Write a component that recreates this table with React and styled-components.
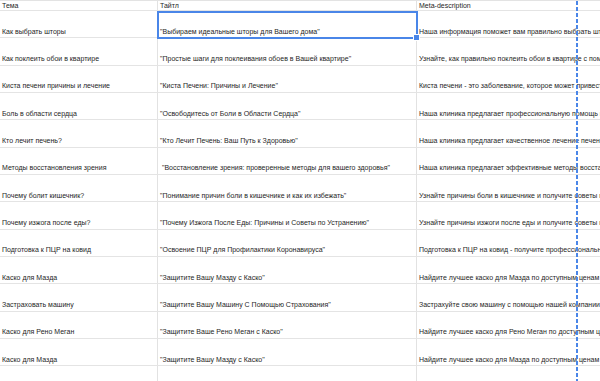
import React from "react";
import styled, { createGlobalStyle } from "styled-components";

const Global = createGlobalStyle`
  html, body { margin: 0; padding: 0; background: #fff; }
  body { font-family: "Liberation Sans", Arial, sans-serif; overflow: hidden; }
`;

const ROW_H = 27.33;

const Sheet = styled.div`
  position: relative;
  width: 600px;
  height: 381px;
  overflow: hidden;
  border-top: 1px solid #e3e3e3;
  box-sizing: border-box;
`;

const Row = styled.div`
  display: grid;
  grid-template-columns: 158px 259px 1fr;
  height: ${(p) => (p.$header ? "10px" : `${ROW_H}px`)};
  box-sizing: border-box;
  border-bottom: 1px solid #e4e4e4;
`;

const Cell = styled.div`
  display: flex;
  align-items: ${(p) => (p.$header ? "center" : "flex-end")};
  padding: ${(p) => (p.$header ? "0 2px" : "0 2px 1.5px 2px")};
  box-sizing: border-box;
  border-right: ${(p) => (p.$last ? "none" : "1px solid #e2e2e2")};
  white-space: pre;
  overflow: hidden;
  font-size: 7px;
  line-height: 8px;
  color: #262626;
`;

const Selection = styled.div`
  position: absolute;
  left: 157px;
  top: 10px;
  width: 261px;
  height: ${ROW_H + 1}px;
  box-sizing: border-box;
  border: 2px solid #4a86e8;
  pointer-events: none;
`;

const Handle = styled.div`
  position: absolute;
  right: -4px;
  bottom: -4px;
  width: 5px;
  height: 5px;
  background: #4a86e8;
  border: 0.5px solid #fff;
`;

const DashedLine = styled.div`
  position: absolute;
  left: 576px;
  top: 0;
  bottom: 0;
  width: 1.5px;
  background: repeating-linear-gradient(
    to bottom,
    #4a86e8 0px,
    #4a86e8 4px,
    transparent 4px,
    transparent 6px
  );
`;

const rows = [
  ["Как выбрать шторы", "\"Выбираем идеальные шторы для Вашего дома\"", "Наша информация поможет вам правильно выбрать шторы для вашего дома"],
  ["Как поклеить обои в квартире", "\"Простые шаги для поклеивания обоев в Вашей квартире\"", "Узнайте, как правильно поклеить обои в квартире с помощью наших советов"],
  ["Киста печени причины и лечение", "\"Киста Печени: Причины и Лечение\"", "Киста печени - это заболевание, которое может привести к осложнениям"],
  ["Боль в области сердца", "\"Освободитесь от Боли в Области Сердца\"", "Наша клиника предлагает профессиональную помощь при боли в сердце"],
  ["Кто лечит печень?", "\"Кто Лечит Печень: Ваш Путь к Здоровью\"", "Наша клиника предлагает качественное лечение печени"],
  ["Методы восстановления зрения", " \"Восстановление зрения: проверенные методы для вашего здоровья\"", "Наша клиника предлагает эффективные методы восстановления зрения"],
  ["Почему болит кишечник?", "\"Понимание причин боли в кишечнике и как их избежать\"", "Узнайте причины боли в кишечнике и получите советы по лечению"],
  ["Почему изжога после еды?", "\"Почему Изжога После Еды: Причины и Советы по Устранению\"", "Узнайте причины изжоги после еды и получите советы по устранению"],
  ["Подготовка к ПЦР на ковид", "\"Освоение ПЦР для Профилактики Коронавируса\"", "Подготовка к ПЦР на ковид - получите профессиональную консультацию"],
  ["Каско для Мазда", "\"Защитите Вашу Мазду с Каско\"", "Найдите лучшее каско для Мазда по доступным ценам и условиям"],
  ["Застраховать машину", "\"Защитите Вашу Машину С Помощью Страхования\"", "Застрахуйте свою машину с помощью нашей компании. Выгодно"],
  ["Каско для Рено Меган", "\"Защитите Ваше Рено Меган с Каско\"", "Найдите лучшее каско для Рено Меган по доступным ценам"],
  ["Каско для Мазда", "\"Защитите Вашу Мазду с Каско\"", "Найдите лучшее каско для Мазда по доступным ценам и условиям"],
  ["", "", ""],
];

export default function App() {
  return (
    <>
      <Global />
      <Sheet>
        <Row $header>
          <Cell $header>Тема</Cell>
          <Cell $header>Тайтл</Cell>
          <Cell $header $last>Meta-description</Cell>
        </Row>
        {rows.map((r, i) => (
          <Row key={i}>
            <Cell>{r[0]}</Cell>
            <Cell>{r[1]}</Cell>
            <Cell $last>{r[2]}</Cell>
          </Row>
        ))}
        <Selection>
          <Handle />
        </Selection>
        <DashedLine />
      </Sheet>
    </>
  );
}
